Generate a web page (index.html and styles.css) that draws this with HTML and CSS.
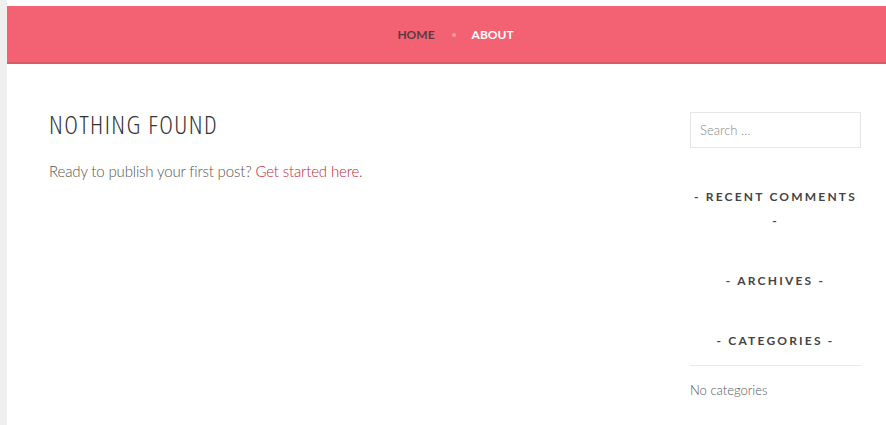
FILE: index.html
```html
<!DOCTYPE html>
<html lang="en">
<head>
<meta charset="utf-8">
<title>Nothing Found</title>
<link rel="stylesheet" href="styles.css">
</head>
<body>
<div class="page">
  <header class="masthead">
    <nav class="main-nav">
      <a class="nav-link nav-home" href="#">Home</a>
      <span class="nav-sep"></span>
      <a class="nav-link nav-about" href="#">About</a>
    </nav>
  </header>
  <div class="site-content">
    <main class="content">
      <h1 class="page-title">Nothing Found</h1>
      <p class="page-text">Ready to publish your first post? <a class="page-link" href="#">Get started here</a>.</p>
    </main>
    <aside class="sidebar">
      <div class="search-box">Search &hellip;</div>
      <h2 class="widget-title widget-first">- Recent Comments -</h2>
      <h2 class="widget-title widget-gap">- Archives -</h2>
      <h2 class="widget-title widget-gap">- Categories -</h2>
      <div class="widget-rule"></div>
      <p class="widget-text">No categories</p>
    </aside>
  </div>
</div>
</body>
</html>
```

FILE: styles.css
```css
html {
  background: #efefef;
}
body {
  margin: 0;
}
.page {
  margin-left: 7px;
  padding-top: 6px;
  background: #fff;
  min-height: 419px;
}
.masthead {
  height: 56px;
  background: #f26272;
  border-bottom: 2px solid #d95a68;
  display: flex;
  align-items: center;
  justify-content: center;
}
.main-nav {
  display: flex;
  align-items: center;
  padding-left: 18px;
  padding-top: 1px;
  font-family: "Lato", "Liberation Sans", sans-serif;
  font-weight: 700;
  font-size: 12px;
  text-transform: uppercase;
}
.nav-link {
  text-decoration: none;
}
.nav-home {
  color: #5a3a44;
}
.nav-about {
  color: #fff;
}
.nav-sep {
  width: 4px;
  height: 4px;
  border-radius: 50%;
  background: #f79aa4;
  margin: 0 16px 0 17px;
}
.site-content {
  display: flex;
  padding: 0 25px 0 42px;
}
.content {
  flex: 1;
  padding-top: 44px;
}
.page-title {
  margin: 0;
  font-family: "Open Sans", "DejaVu Sans Condensed", sans-serif;
  font-stretch: 75%;
  font-weight: 300;
  font-size: 26px;
  line-height: 32px;
  letter-spacing: 1.5px;
  color: #333;
  text-transform: uppercase;
}
.page-text {
  margin: 19px 0 0;
  font-family: "Lato", "Liberation Sans", sans-serif;
  font-weight: 300;
  font-size: 15px;
  line-height: 24px;
  letter-spacing: -0.15px;
  color: #555;
}
.page-link {
  color: #bf2a3c;
  text-decoration: none;
}
.sidebar {
  width: 171px;
  padding-top: 48px;
  text-align: center;
}
.search-box {
  height: 34px;
  border: 1px solid #e6e6e6;
  text-align: left;
  padding-left: 9px;
  font-family: "Lato", "Liberation Sans", sans-serif;
  font-weight: 300;
  font-size: 13px;
  line-height: 34px;
  color: #888;
}
.widget-title {
  margin: 0;
  font-family: "Lato", "Liberation Sans", sans-serif;
  font-weight: 700;
  font-size: 12px;
  line-height: 24px;
  letter-spacing: 2.2px;
  color: #444;
  text-transform: uppercase;
}
.widget-first {
  margin-top: 37px;
}
.widget-gap {
  margin-top: 36px;
}
.widget-rule {
  height: 1px;
  background: #e8e8e8;
  margin-top: 12px;
}
.widget-text {
  margin: 12px 0 0;
  text-align: left;
  font-family: "Lato", "Liberation Sans", sans-serif;
  font-weight: 300;
  font-size: 13px;
  line-height: 24px;
  color: #555;
}
```
